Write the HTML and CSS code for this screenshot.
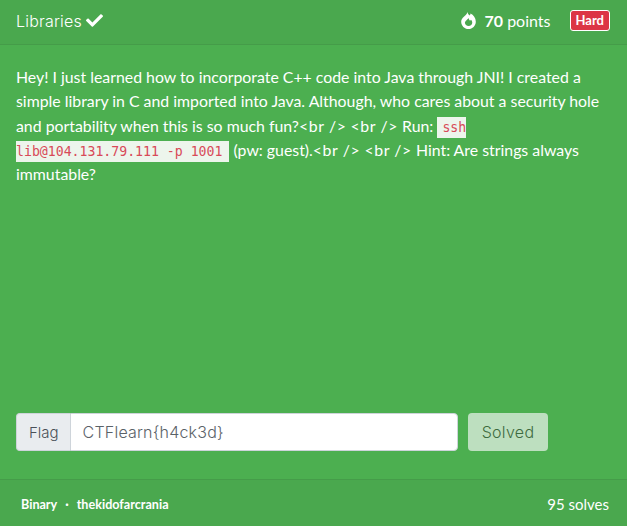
FILE: index.html
```html
<!DOCTYPE html>
<html lang="en">

<head>
  <meta charset="UTF-8">
  <title>Libraries</title>
  <link rel="stylesheet" href="styles.css">
</head>

<body>
  <div class="card">
    <header class="card__header">
      <h1 class="card__title">
        Libraries
        <svg class="card__check" viewBox="0 0 512 512" aria-hidden="true">
          <path fill="#fff" d="M173.9 439.4L7.5 273c-10-10-10-26.2 0-36.2l36.2-36.2c10-10 26.2-10 36.2 0L192 312.7 432.1 72.6c10-10 26.2-10 36.2 0l36.2 36.2c10 10 10 26.2 0 36.2L210.1 439.4c-10 10-26.2 10-36.2 0z"/>
        </svg>
      </h1>
      <div class="card__meta">
        <svg class="card__fire" viewBox="0 0 16 18" aria-hidden="true">
          <path fill="#fff" fill-rule="evenodd" d="M7 0c0.2 1.9 1.1 3 2.4 3.6 0.4-0.6 0.7-1.3 0.7-2 3.2 1.6 5.7 4.6 5.7 8.6 0 4.3-3.5 7.8-7.8 7.8S0.2 14.5 0.2 10.2C0.2 6 5.6 4.3 7 0zM8 6.2c-0.5 1.6-3.8 2.7-3.8 5.3 0 2.1 1.7 3.4 3.9 3.4s3.9-1.5 3.9-3.5c0-1.3-0.6-2.4-1.4-3.2-0.2 0.5-0.5 0.8-1 1C8.8 8.2 8.3 7.3 8 6.2z"/>
        </svg>
        <span class="card__points"><b>70</b> points</span>
        <span class="badge">Hard</span>
      </div>
    </header>

    <main class="card__body">
      <p class="card__text">Hey! I just learned how to incorporate C++ code into Java through JNI! I created a simple library in C and imported into Java. Although, who cares about a security hole and portability when this is so much fun?<span class="card__tag">&lt;br /&gt;</span> <span class="card__tag">&lt;br /&gt;</span> Run: <code class="card__code">ssh lib@104.131.79.111&nbsp;-p&nbsp;1001</code> (pw: guest).<span class="card__tag">&lt;br /&gt;</span> <span class="card__tag">&lt;br /&gt;</span> Hint: Are strings always immutable?</p>

      <form class="flag">
        <div class="flag__group">
          <span class="flag__label">Flag</span>
          <input class="flag__input" type="text" value="CTFlearn{h4ck3d}">
        </div>
        <button class="flag__btn" type="button">Solved</button>
      </form>
    </main>

    <footer class="card__footer">
      <div class="card__info">
        <span>Binary</span>
        <span class="card__dot">·</span>
        <span>thekidofarcrania</span>
      </div>
      <span class="card__solves">95 solves</span>
    </footer>
  </div>
</body>

</html>
```

FILE: styles.css
```css
html,
body {
  height: 100%;
  margin: 0;
}

body {
  font-family: Lato, "Open Sans", sans-serif;
  color: #fff;
  background-color: #4caf50;
}

.card {
  display: flex;
  flex-direction: column;
  height: 526px;
  box-sizing: border-box;
}

.card__header {
  display: flex;
  justify-content: space-between;
  align-items: center;
  height: 45px;
  padding: 0 17px 3px 16px;
  box-sizing: border-box;
  background-color: #4aa84e;
  border-bottom: 1px solid #459c49;
}

.card__title {
  display: flex;
  align-items: center;
  gap: 4px;
  margin: 0;
  font-family: Inter, sans-serif;
  font-size: 16px;
  font-weight: 300;
  letter-spacing: 0.2px;
}

.card__check {
  width: 17px;
  height: 17px;
}

.card__meta {
  display: flex;
  align-items: center;
}

.card__fire {
  width: 15px;
  height: 17px;
  margin-right: 8px;
}

.card__points {
  font-size: 16px;
  margin-right: 19px;
}

.badge {
  padding: 3px 5px;
  font-size: 13px;
  font-weight: 700;
  line-height: 13px;
  background-color: #dc3545;
  border: 1px solid #fff;
  border-radius: 3px;
}

.card__body {
  flex: 1;
  display: flex;
  flex-direction: column;
  justify-content: space-between;
  padding: 20px 16px 28px;
}

.card__text {
  margin: 0;
  font-size: 15.85px;
  line-height: 24.3px;
}

.card__tag {
  letter-spacing: 0.6px;
}

.card__code {
  padding: 3px 7px 3px 5px;
  font-family: "DejaVu Sans Mono", monospace;
  font-size: 13.2px;
  line-height: 1;
  color: #d84a58;
  background-color: #edf5ec;
}

.flag {
  display: flex;
  gap: 10px;
}

.flag__group {
  display: flex;
  width: 442px;
  height: 38px;
}

.flag__label {
  display: flex;
  align-items: center;
  padding: 0 11px 0 12px;
  font-family: Inter, sans-serif;
  font-size: 15px;
  font-weight: 300;
  color: #495057;
  background-color: #e9ecef;
  border: 1px solid #ced4da;
  border-right: none;
  border-radius: 4px 0 0 4px;
}

.flag__input {
  flex: 1;
  min-width: 0;
  padding: 0 12px;
  font-family: Inter, sans-serif;
  font-size: 16px;
  font-weight: 300;
  letter-spacing: 0.2px;
  color: #5a6268;
  border: 1px solid #ced4da;
  border-radius: 0 4px 4px 0;
}

.flag__btn {
  width: 80px;
  height: 38px;
  font-family: Inter, sans-serif;
  font-size: 16px;
  font-weight: 300;
  letter-spacing: 0.3px;
  color: #3d6b40;
  background-color: #bddfbf;
  border: none;
  border-radius: 4px;
}

.card__footer {
  display: flex;
  justify-content: space-between;
  align-items: center;
  height: 47px;
  padding: 0 18px 0 21px;
  box-sizing: border-box;
  background-color: #4aa84e;
  border-top: 1px solid #459c49;
}

.card__info {
  display: flex;
  gap: 8px;
  padding-top: 3px;
  font-size: 12.6px;
  font-weight: 700;
}

.card__solves {
  padding-top: 1px;
  font-size: 15px;
}
```
